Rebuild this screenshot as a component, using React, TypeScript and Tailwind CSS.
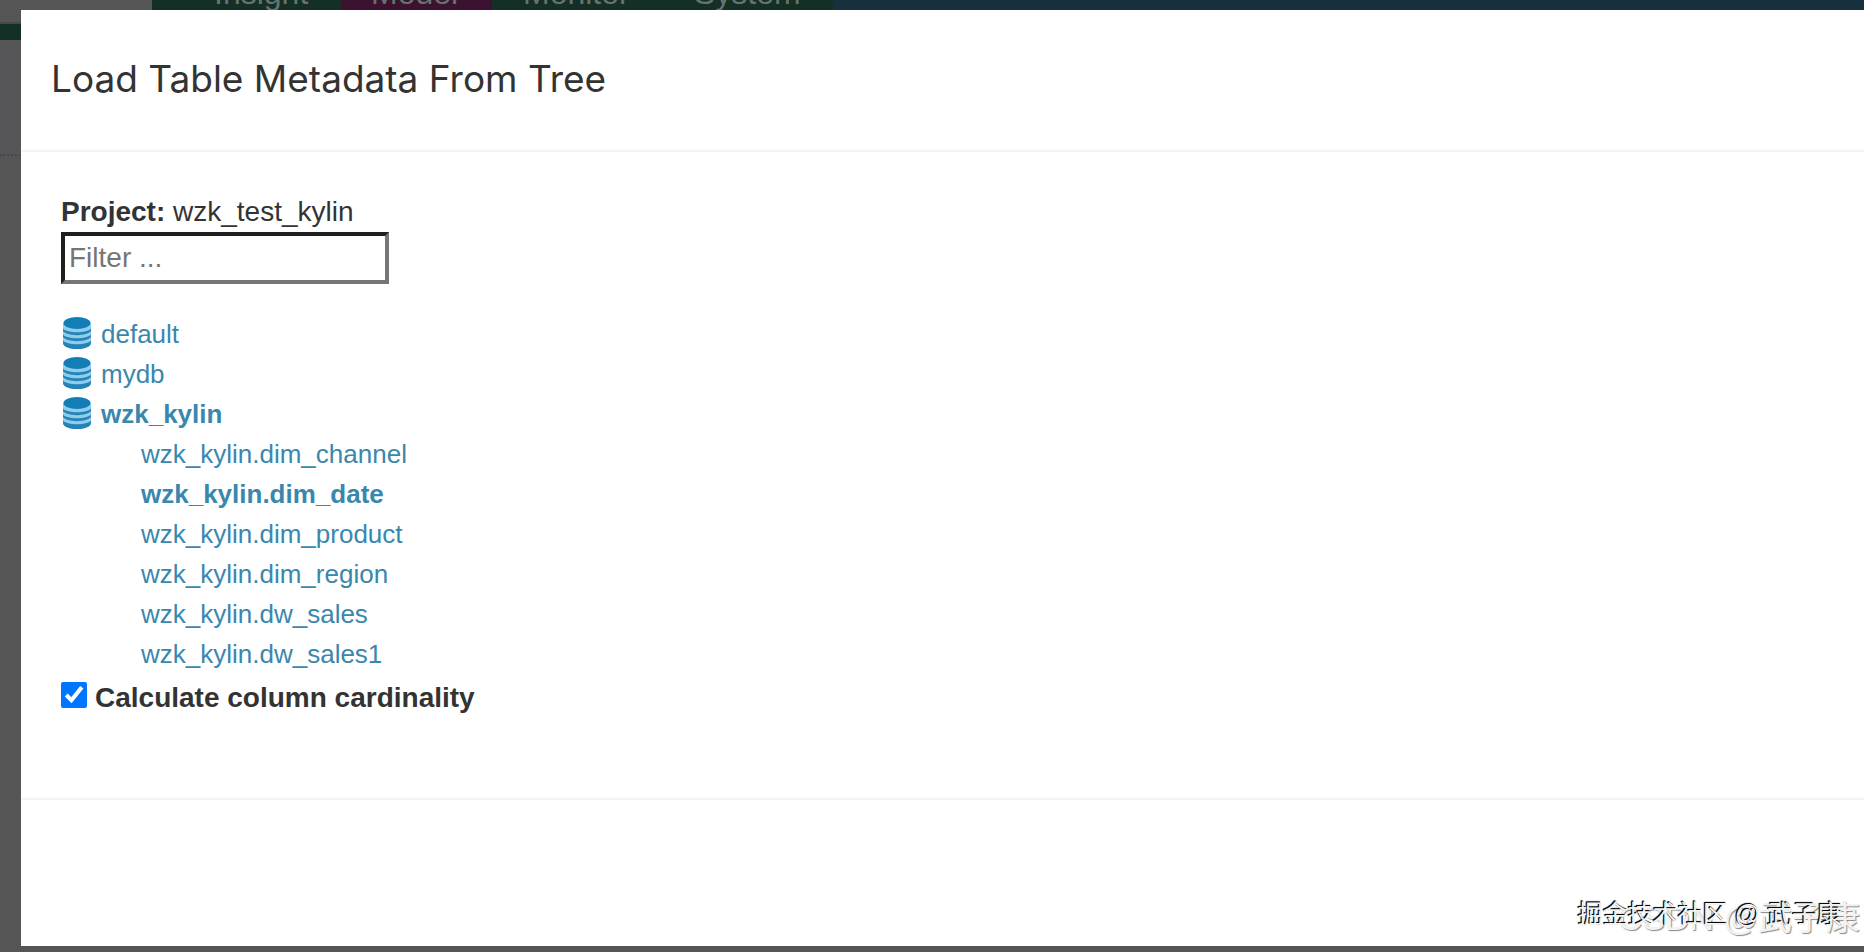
import { useState } from 'react';

const tabs = [
  { label: 'Insight', className: 'w-[189px] pl-[62px] bg-[#132f26]' },
  { label: 'Model', className: 'w-[151px] pl-[30px] bg-[#3b1230]' },
  { label: 'Monitor', className: 'w-[172px] pl-[31px] bg-[#132f26]' },
  { label: 'System', className: 'w-[169px] pl-[30px] bg-[#132f26]' },
];

const databases = [
  { name: 'default', tables: [] },
  { name: 'mydb', tables: [] },
  {
    name: 'wzk_kylin',
    tables: [
      'wzk_kylin.dim_channel',
      'wzk_kylin.dim_date',
      'wzk_kylin.dim_product',
      'wzk_kylin.dim_region',
      'wzk_kylin.dw_sales',
      'wzk_kylin.dw_sales1',
    ],
  },
];

const selected = ['wzk_kylin', 'wzk_kylin.dim_date'];

function DatabaseIcon() {
  return (
    <svg className="mt-[3px]" width="28" height="32" viewBox="0 0 28 32" aria-hidden="true">
      <path d="M0 6v20c0 8 28 8 28 0V6z" fill="#8fcdec" />
      <path d="M0 23.500c4 5 24 5 28 0V26c-1 8-27 8-28 0z" fill="#2583b6" />
      <path d="M0 17.500c4 5 24 5 28 0V20c-4 5.500-24 5.500-28 0z" fill="#2583b6" />
      <path d="M0 11.500c4 5 24 5 28 0V14c-4 5.500-24 5.500-28 0z" fill="#2583b6" />
      <ellipse cx="14" cy="6" rx="13.500" ry="6" fill="#137db5" />
    </svg>
  );
}

function TreeLink({ name }: { name: string }) {
  return (
    <a href="#" className={selected.includes(name) ? 'font-bold' : ''}>
      {name}
    </a>
  );
}

function TopNav() {
  return (
    <header>
      <nav className="flex h-[22px] pl-[152px] overflow-hidden">
        {tabs.map((tab) => (
          <a key={tab.label} href="#" className={`${tab.className} h-12 -mt-6 text-[32px] leading-[34px] text-[#66736e]`}>
            {tab.label}
          </a>
        ))}
        <div className="flex-1 bg-[#17303d]" />
      </nav>
      <div className="h-0.5 bg-[#474747]" />
      <div className="h-4 bg-[#132f26]" />
      <div className="h-[116px] border-b-2 border-dotted border-[#474747] bg-[#565658]" />
    </header>
  );
}

function Watermark() {
  return (
    <div className="grid justify-items-end font-['Liberation_Sans','Noto_Sans_CJK_SC',sans-serif] whitespace-nowrap">
      <span className="col-start-1 row-start-1 pt-2 pb-2 pr-1 text-[34px] leading-10 text-[#f2f2f2] [text-shadow:1px_1px_1px_#888]">
        CSDN @武子康
      </span>
      <span className="col-start-1 row-start-1 pt-1 pr-[22px] text-[25px] leading-10 text-[#f2f2f2] [text-shadow:-1px_-1px_1px_#000,-1px_-1px_0_#333]">
        掘金技术社区 @ 武子康
      </span>
    </div>
  );
}

export default function App() {
  const [filter, setFilter] = useState('');
  const [cardinality, setCardinality] = useState(true);

  return (
    <div className="grid min-h-screen bg-[#555555] font-['Liberation_Sans',Arial,sans-serif] text-[#333333]">
      <div className="col-start-1 row-start-1">
        <TopNav />
      </div>

      <div role="dialog" aria-labelledby="title" className="z-10 col-start-1 row-start-1 mt-[10px] mb-[6px] ml-[21px] flex flex-col bg-white">
        <div className="px-[30px] pt-12 pb-[50px] border-b-2 border-[#f4f4f4]">
          <h3 id="title" className="font-['Inter',sans-serif] text-[37px] leading-[42px]">
            Load Table Metadata From Tree
          </h3>
        </div>

        <div className="px-10 pt-10 pb-20 border-b-2 border-[#f4f4f4]">
          <div className="text-[28px] leading-10">
            <b>Project:</b> wzk_test_kylin
          </div>
          <input
            type="text"
            aria-label="Filter"
            placeholder="Filter ..."
            value={filter}
            onChange={(e) => setFilter(e.target.value)}
            className="block w-[328px] h-[52px] px-1 border-4 border-t-[#1f1f1f] border-l-[#1f1f1f] border-r-[#767676] border-b-[#767676] text-[28px] placeholder:text-[#757575]"
          />

          <ul className="mt-[30px] text-[26px] leading-10 text-[#3a87ad]">
            {databases.map((db) => (
              <li key={db.name}>
                <div className="flex items-start gap-[10px] pl-0.5">
                  <DatabaseIcon />
                  <TreeLink name={db.name} />
                </div>
                <ul className="pl-20">
                  {db.tables.map((table) => (
                    <li key={table}>
                      <TreeLink name={table} />
                    </li>
                  ))}
                </ul>
              </li>
            ))}
          </ul>

          <label className="flex items-start gap-2 pt-1 text-[28px] leading-10 font-bold">
            <input
              type="checkbox"
              checked={cardinality}
              onChange={(e) => setCardinality(e.target.checked)}
              className="mt-1 size-[26px] accent-[#0075ff]"
            />
            Calculate column cardinality
          </label>
        </div>

        <div className="flex flex-1 items-end justify-end">
          <Watermark />
        </div>
      </div>
    </div>
  );
}
